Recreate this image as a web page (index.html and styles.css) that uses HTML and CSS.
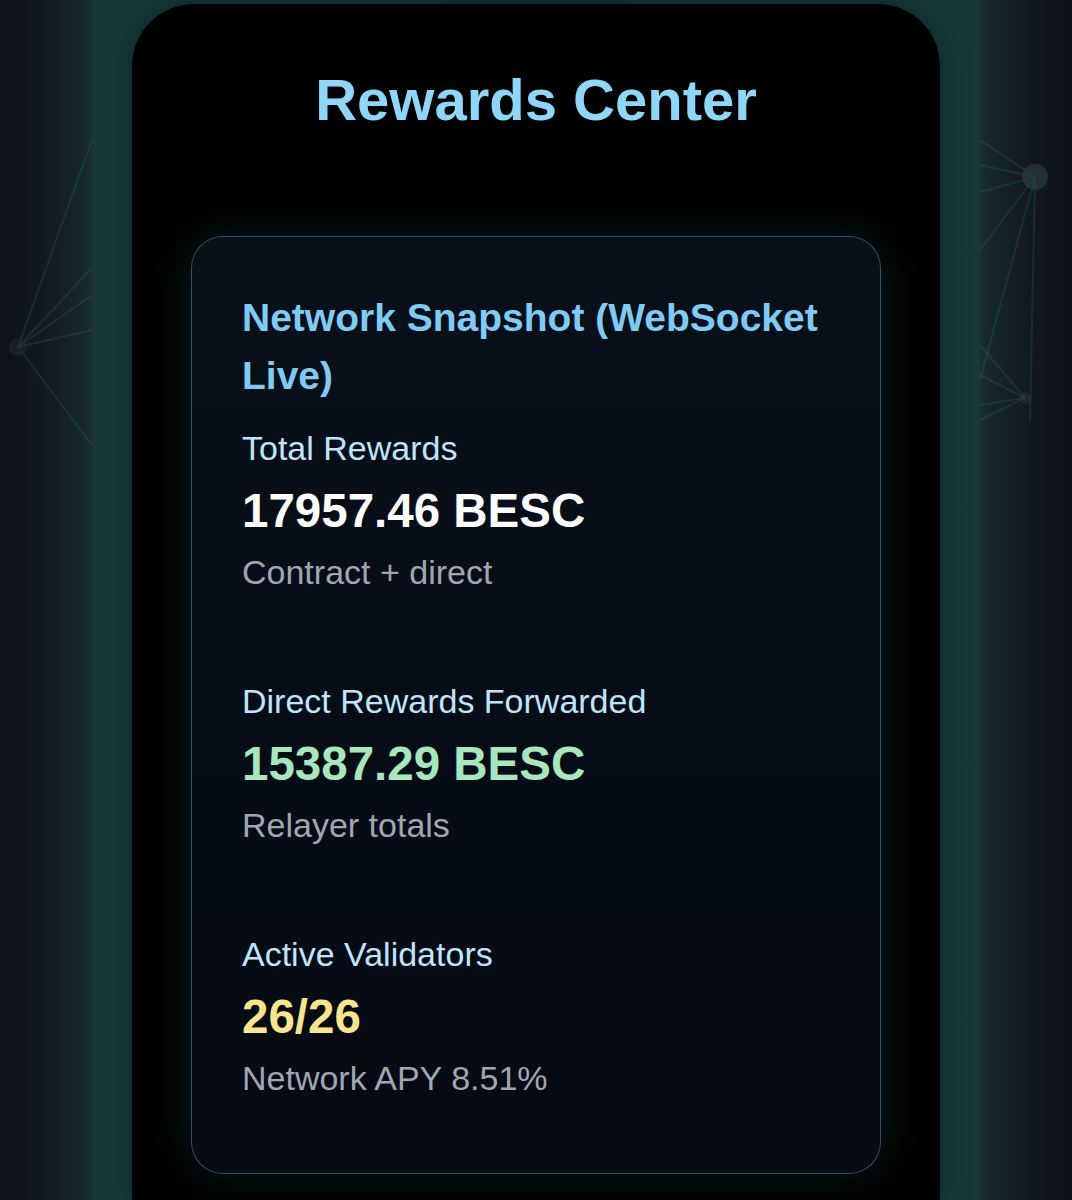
FILE: index.html
```html
<!DOCTYPE html>
<html lang="en">
<head>
<meta charset="utf-8">
<title>Rewards Center</title>
<link rel="stylesheet" href="styles.css">
</head>
<body>
<svg class="net" width="1072" height="1200" viewBox="0 0 1072 1200" aria-hidden="true">
  <g stroke="#3f9497" stroke-width="2" stroke-opacity="0.16" fill="none">
    <line x1="18" y1="347" x2="92" y2="140"/>
    <line x1="18" y1="347" x2="92" y2="268"/>
    <line x1="18" y1="347" x2="92" y2="295"/>
    <line x1="18" y1="347" x2="92" y2="330"/>
    <line x1="18" y1="347" x2="92" y2="445"/>
    <line x1="1035" y1="177" x2="980" y2="140"/>
    <line x1="1035" y1="177" x2="980" y2="165"/>
    <line x1="1035" y1="177" x2="980" y2="192"/>
    <line x1="1035" y1="177" x2="980" y2="250"/>
    <line x1="1035" y1="177" x2="980" y2="380"/>
    <line x1="1035" y1="177" x2="1030" y2="420"/>
    <line x1="1025" y1="398" x2="980" y2="345"/>
    <line x1="1025" y1="398" x2="980" y2="375"/>
    <line x1="1025" y1="398" x2="980" y2="405"/>
    <line x1="1025" y1="398" x2="980" y2="420"/>
  </g>
  <circle cx="1035" cy="177" r="13" fill="#2a3c42" fill-opacity="0.7"/>
  <circle cx="18" cy="347" r="9" fill="#2a2a30" fill-opacity="0.5"/>
  <circle cx="1025" cy="398" r="6" fill="#2a3c42" fill-opacity="0.4"/>
</svg>
<div class="band">
  <main class="panel">
    <h1 class="title">Rewards Center</h1>
    <section class="card">
      <h2 class="card-head">Network Snapshot (WebSocket Live)</h2>
      <div class="stat">
        <div class="label">Total Rewards</div>
        <div class="value white">17957.46 BESC</div>
        <div class="sub">Contract + direct</div>
      </div>
      <div class="stat">
        <div class="label">Direct Rewards Forwarded</div>
        <div class="value green">15387.29 BESC</div>
        <div class="sub">Relayer totals</div>
      </div>
      <div class="stat">
        <div class="label">Active Validators</div>
        <div class="value yellow">26/26</div>
        <div class="sub">Network APY 8.51%</div>
      </div>
    </section>
  </main>
</div>
</body>
</html>
```
FILE: styles.css
```css
html, body {
  margin: 0;
  padding: 0;
}
body {
  width: 1072px;
  height: 1200px;
  overflow: hidden;
  position: relative;
  font-family: "Liberation Sans", Arial, Helvetica, sans-serif;
  background: linear-gradient(90deg, #0e1117 0%, #121c22 5%, #182c31 8.6%, #182c31 91.4%, #121c22 95%, #0e1117 100%);
}
.net {
  position: absolute;
  left: 0;
  top: 0;
  z-index: 0;
  filter: blur(0.6px);
}
.band {
  position: relative;
  z-index: 1;
  width: 888px;
  height: 1200px;
  margin: 0 auto;
  box-sizing: border-box;
  padding: 4px 40px 0;
  background: linear-gradient(90deg, #16373a 0%, #15393b 4.5%, #133436 50%, #15393b 95.5%, #16373a 100%);
}
.panel {
  box-sizing: border-box;
  height: 100%;
  background: #000;
  border-radius: 62px 62px 0 0;
  padding: 61px 59px 0;
  box-shadow: 0 0 30px rgba(0, 0, 0, 0.35);
}
.title {
  margin: 0;
  text-align: center;
  font-size: 58px;
  line-height: 70px;
  font-weight: 700;
  color: #8dd7f9;
}
.card {
  margin-top: 101px;
  box-sizing: border-box;
  width: 690px;
  height: 938px;
  border: 1.5px solid #30506a;
  border-top-color: #2b5766;
  border-radius: 32px;
  background: linear-gradient(180deg, #08101a 0%, #060c15 60%, #050a13 100%);
  padding: 52px 50px 0;
  box-shadow: 0 0 44px rgba(24, 96, 98, 0.3);
}
.card-head {
  margin: 0 0 18px;
  font-size: 39px;
  line-height: 58px;
  font-weight: 700;
  color: #7cccf3;
}
.stat {
  margin-bottom: 79px;
}
.stat:last-child {
  margin-bottom: 0;
}
.label {
  font-size: 34px;
  line-height: 50px;
  color: #bde6fb;
}
.value {
  margin-top: 2px;
  font-size: 47.5px;
  line-height: 72px;
  font-weight: 700;
}
.white { color: #ffffff; }
.green { color: #a6e8be; }
.yellow { color: #f9e58c; }
.sub {
  font-size: 34px;
  line-height: 50px;
  color: #a1a6b0;
}
```
